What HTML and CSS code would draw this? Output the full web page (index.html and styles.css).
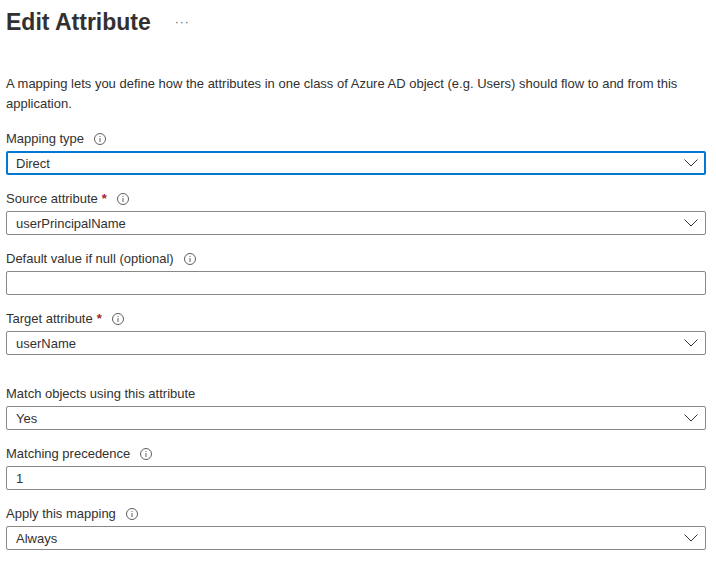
FILE: index.html
```html
<!DOCTYPE html>
<html>
<head>
    <title>Edit Attribute</title>
    <link rel="stylesheet" href="styles.css">
</head>
<body>
    <div class="blade">
        <div class="blade-header">
            <h1>Edit Attribute</h1>
            <span class="more">&middot;&middot;&middot;</span>
        </div>

        <p class="intro">A mapping lets you define how the attributes in one class of Azure AD object (e.g. Users) should flow to and from this application.</p>

        <div class="field">
            <label>Mapping type <span class="info"></span></label>
            <div class="select focused"><span>Direct</span><span class="chevron"></span></div>
        </div>

        <div class="field">
            <label>Source attribute <span class="req">*</span> <span class="info"></span></label>
            <div class="select"><span>userPrincipalName</span><span class="chevron"></span></div>
        </div>

        <div class="field">
            <label>Default value if null (optional) <span class="info"></span></label>
            <div class="textbox"></div>
        </div>

        <div class="field">
            <label>Target attribute <span class="req">*</span> <span class="info"></span></label>
            <div class="select"><span>userName</span><span class="chevron"></span></div>
        </div>

        <div class="field spaced">
            <label>Match objects using this attribute</label>
            <div class="select"><span>Yes</span><span class="chevron"></span></div>
        </div>

        <div class="field">
            <label>Matching precedence <span class="info"></span></label>
            <div class="textbox"><span>1</span></div>
        </div>

        <div class="field">
            <label>Apply this mapping <span class="info"></span></label>
            <div class="select"><span>Always</span><span class="chevron"></span></div>
        </div>
    </div>

    <script>
        // same glyphs for every info badge and dropdown arrow
        const infoSvg = '<svg width="12" height="12" viewBox="0 0 12 12"><circle cx="6" cy="6" r="5.5" fill="none" stroke="#605e5c"/><rect x="5.5" y="5" width="1" height="4" fill="#605e5c"/><rect x="5.5" y="3" width="1" height="1" fill="#605e5c"/></svg>';
        const chevronSvg = '<svg width="14" height="8" viewBox="0 0 14 8"><path d="M0.5 0.5 L7 7 L13.5 0.5" fill="none" stroke="#323130" stroke-width="1"/></svg>';

        document.querySelectorAll('.info').forEach(el => el.innerHTML = infoSvg);
        document.querySelectorAll('.chevron').forEach(el => el.innerHTML = chevronSvg);
    </script>
</body>
</html>
```

FILE: styles.css
```css
body {
    font-family: "Liberation Sans", Arial, sans-serif;
    font-size: 13px;
    color: #323130;
    margin: 0;
    padding: 0 10px 0 6px;
    background: white;
}

.blade-header {
    display: flex;
    align-items: center;
    height: 44px;
}

h1 {
    font-size: 23px;
    font-weight: 600;
    margin: 0;
    color: #323130;
}

.more {
    margin-left: 24px;
    font-size: 12px;
    color: #605e5c;
    letter-spacing: 1px;
}

.intro {
    margin: 30px 0 15px;
    line-height: 20px;
}

.field {
    margin-bottom: 14px;
}

.field.spaced {
    margin-top: 29px;
}

label {
    display: flex;
    align-items: center;
    line-height: 20px;
    height: 20px;
    margin-bottom: 2px;
}

.req {
    color: #a4262c;
    font-weight: bold;
    margin-left: 4px;
}

.info {
    display: inline-flex;
    margin-left: 10px;
}

.select,
.textbox {
    box-sizing: border-box;
    height: 24px;
    border: 1px solid #8a8886;
    border-radius: 2px;
    padding: 0 7px 0 9px;
    display: flex;
    align-items: center;
    justify-content: space-between;
}

.select.focused {
    border: 2px solid #0078d4;
    padding: 0 6px 0 8px;
}

.chevron {
    display: inline-flex;
}
```
